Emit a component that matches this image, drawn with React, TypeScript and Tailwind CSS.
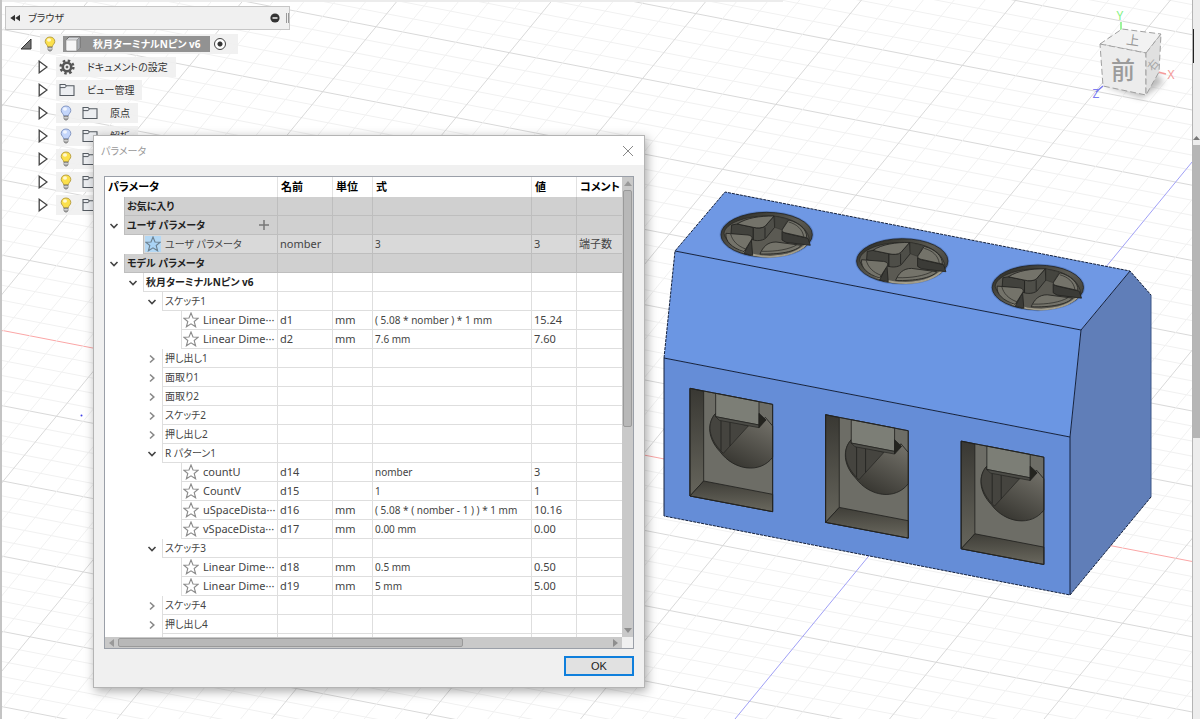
import type { ReactNode } from "react";
import clsx from "clsx";

interface ParamRow {
  level: number;
  label: string;
  kind: "band" | "user" | "group" | "param";
  open?: boolean;
  bold?: boolean;
  addable?: boolean;
  name?: string;
  unit?: string;
  formula?: string;
  value?: string;
  comment?: string;
}

const ROWS: ParamRow[] = [
  { level: 0, label: "お気に入り", kind: "band", bold: true },
  { level: 0, label: "ユーザ パラメータ", kind: "band", bold: true, open: true, addable: true },
  { level: 1, label: "ユーザ パラメータ", kind: "user", name: "nomber", formula: "3", value: "3", comment: "端子数" },
  { level: 0, label: "モデル パラメータ", kind: "band", bold: true, open: true },
  { level: 1, label: "秋月ターミナルNピン v6", kind: "group", bold: true, open: true },
  { level: 2, label: "スケッチ1", kind: "group", open: true },
  { level: 3, label: "Linear Dime···", kind: "param", name: "d1", unit: "mm", formula: "( 5.08 * nomber ) * 1 mm", value: "15.24" },
  { level: 3, label: "Linear Dime···", kind: "param", name: "d2", unit: "mm", formula: "7.6 mm", value: "7.60" },
  { level: 2, label: "押し出し1", kind: "group", open: false },
  { level: 2, label: "面取り1", kind: "group", open: false },
  { level: 2, label: "面取り2", kind: "group", open: false },
  { level: 2, label: "スケッチ2", kind: "group", open: false },
  { level: 2, label: "押し出し2", kind: "group", open: false },
  { level: 2, label: "R パターン1", kind: "group", open: true },
  { level: 3, label: "countU", kind: "param", name: "d14", formula: "nomber", value: "3" },
  { level: 3, label: "CountV", kind: "param", name: "d15", formula: "1", value: "1" },
  { level: 3, label: "uSpaceDista···", kind: "param", name: "d16", unit: "mm", formula: "( 5.08 * ( nomber - 1 ) ) * 1 mm", value: "10.16" },
  { level: 3, label: "vSpaceDista···", kind: "param", name: "d17", unit: "mm", formula: "0.00 mm", value: "0.00" },
  { level: 2, label: "スケッチ3", kind: "group", open: true },
  { level: 3, label: "Linear Dime···", kind: "param", name: "d18", unit: "mm", formula: "0.5 mm", value: "0.50" },
  { level: 3, label: "Linear Dime···", kind: "param", name: "d19", unit: "mm", formula: "5 mm", value: "5.00" },
  { level: 2, label: "スケッチ4", kind: "group", open: false },
  { level: 2, label: "押し出し4", kind: "group", open: false },
  { level: 2, label: "", kind: "group" },
];

const INDENT = ["w-0", "w-[19px]", "w-[38px]", "w-[57px]"];

function Star({ active }: { active?: boolean }) {
  return (
    <svg viewBox="0 0 16 16" className={clsx("h-4 w-4 shrink-0", active && "bg-[#b4d8f4]")} aria-hidden="true">
      <path
        d="M8 1 L10 6 L15.2 6.2 L11.2 9.5 L12.6 14.8 L8 11.8 L3.4 14.8 L4.8 9.5 L.8 6.2 L6 6 Z"
        fill={active ? "#a9d3f5" : "#fff"}
        stroke={active ? "#6b7f8e" : "#8a8a8a"}
        strokeWidth="1.1"
      />
    </svg>
  );
}

function Chevron({ open }: { open: boolean }) {
  return (
    <svg viewBox="0 0 10 10" className="h-[10px] w-[10px]" fill="none" strokeWidth="1.6" aria-hidden="true">
      {open ? <path d="M1.5 3 L5 6.5 L8.5 3" stroke="#444" /> : <path d="M3 1.5 L6.8 5 L3 8.5" stroke="#888" />}
    </svg>
  );
}

function Bulb({ on }: { on: boolean }) {
  return (
    <svg viewBox="0 0 12 16" className="h-4 w-3 shrink-0" aria-hidden="true">
      <path
        d="M6 1 C3 1 1.2 3 1.2 5.6 C1.2 7.8 3.6 8.8 3.8 11 L8.2 11 C8.4 8.8 10.8 7.8 10.8 5.6 C10.8 3 9 1 6 1Z"
        fill={on ? "#fbe04c" : "#c4d6fb"}
        stroke={on ? "#b39a3c" : "#7c90bd"}
        strokeWidth=".9"
      />
      <ellipse cx="5" cy="4" rx="2" ry="1.7" fill="#fff" opacity=".75" />
      <path d="M4 11 H8 V13.5 L7 15 H5 L4 13.5Z" fill="#aaa" stroke="#6d6d6d" strokeWidth=".7" />
      <path d="M4 12.7 H8" stroke="#eee" strokeWidth=".7" />
    </svg>
  );
}

function Folder() {
  return (
    <svg viewBox="0 0 16 14" className="h-[14px] w-4 shrink-0" aria-hidden="true">
      <path d="M1 12.5 V1.5 H6 L7.2 2.8 H15 V12.5Z" fill="#eceef1" stroke="#555b62" strokeWidth="1.1" />
      <path d="M1 4.6 H6.2 L7.4 2.8" fill="none" stroke="#555b62" />
    </svg>
  );
}

function Gear() {
  return (
    <svg viewBox="0 0 16 16" className="h-4 w-4 shrink-0" fill="none" stroke="#555" aria-hidden="true">
      <circle cx="8" cy="8" r="6.4" strokeWidth="2.4" strokeDasharray="2.5 2.52" />
      <circle cx="8" cy="8" r="4.2" strokeWidth="2.6" />
      <circle cx="8" cy="8" r="1" fill="#555" />
    </svg>
  );
}

function Cube() {
  return (
    <svg viewBox="0 0 16 16" className="h-4 w-4 shrink-0" stroke="#555" strokeWidth=".8" aria-hidden="true">
      <path d="M1 4 L4 1 H15 V12 L12 15 H2 L1 14Z" fill="#d9dbde" />
      <path d="M1 4 H12 V15 H2 L1 14Z" fill="#f6f6f7" stroke="#aaa" />
      <path d="M12 4 L15 1 V12 L12 15Z" fill="#a9adb3" stroke="#888" />
    </svg>
  );
}

function TreeRow({ icons, label }: { icons: ReactNode; label: string }) {
  return (
    <li className="flex h-[23px] items-center pl-[36px]">
      <button type="button" aria-label={`${label || "コンポーネント"}を展開`} className="mr-2 flex w-[10px] justify-center">
        <svg viewBox="0 0 10 14" className="h-[14px] w-[10px]" aria-hidden="true">
          <path d="M1.2 1.2 L9 7 L1.2 12.8Z" fill="#fff" stroke="#444" strokeWidth="1.3" />
        </svg>
      </button>
      <span className="flex h-5 items-center bg-[#f0f0f0]/90 pr-2 pl-[3px]">
        {icons}
        <span className="ml-3">{label}</span>
      </span>
    </li>
  );
}

function BrowserPanel() {
  return (
    <nav aria-label="ブラウザ" className="relative w-[288px] pt-[6px] text-[10px] leading-4 text-[#333]">
      <div className="ml-[3px] flex h-6 items-center border border-[#c6c6c6] bg-[#f0f0f0] pl-1">
        <button type="button" aria-label="折りたたむ">
          <svg viewBox="0 0 10 8" className="h-2 w-[10px]" aria-hidden="true">
            <path d="M5 .8 V7.2 L.3 4Z M10 .8 V7.2 L5.3 4Z" fill="#333" />
          </svg>
        </button>
        <span className="ml-2 flex-1">ブラウザ</span>
        <button type="button" aria-label="閉じる" className="mr-[6px]">
          <svg viewBox="0 0 10 10" className="h-[10px] w-[10px]" aria-hidden="true">
            <circle cx="5" cy="5" r="4.6" fill="#333" />
            <path d="M2.5 5 H7.5" stroke="#fff" strokeWidth="1.4" />
          </svg>
        </button>
        <span className="h-[10px] w-[3px] border-x border-[#999]" />
      </div>
      <ul className="pt-[2px]">
        <li className="flex h-[23px] items-center pl-[18px]">
          <button type="button" aria-label="ルートを折りたたむ">
            <svg viewBox="0 0 12 12" className="h-3 w-3" aria-hidden="true">
              <path d="M11 1 V11 H1Z" fill="#777" stroke="#333" />
            </svg>
          </button>
          <span className="ml-2 flex h-5 items-center bg-[#f0f0f0]/90 pr-3 pl-1">
            <Bulb on />
            <span className="mr-1 ml-[7px] flex h-4 items-center bg-[#929292] pr-[9px] pl-[2px] font-bold text-white">
              <Cube />
              <span className="ml-3">秋月ターミナルNピン v6</span>
            </span>
            <input
              type="radio"
              aria-label="アクティブ"
              defaultChecked
              className="h-3 w-3 appearance-none rounded-full border border-[#444] bg-[radial-gradient(#333_0_2px,#fff_3px)]"
            />
          </span>
        </li>
        <TreeRow icons={<Gear />} label="ドキュメントの設定" />
        <TreeRow icons={<Folder />} label="ビュー管理" />
        {["原点", "解析", "", "", ""].map((label, i) => (
          <TreeRow
            key={i}
            label={label}
            icons={
              <span className="flex items-center gap-[10px] pl-[1px]">
                <Bulb on={i > 1} />
                <Folder />
              </span>
            }
          />
        ))}
      </ul>
    </nav>
  );
}

function ParamTableRow({ row }: { row: ParamRow }) {
  const shade = row.kind === "band" ? "bg-[#d0d0d0]" : row.kind === "user" ? "bg-[#d9d9d9]" : "bg-white";
  const line = row.kind === "band" || row.kind === "user" ? "border-[#bebebe]" : "border-[#dedede]";
  const cell = clsx("border-b border-l p-0 pl-[2px] whitespace-nowrap", shade, line);
  const hasStar = row.kind === "param" || row.kind === "user";

  return (
    <tr className="h-[19px]">
      <td className="p-0">
        <div className="flex h-[19px]">
          <span className={clsx("shrink-0", INDENT[row.level])} />
          <span className="flex w-[19px] shrink-0 items-center justify-center pr-[2px]">
            {row.open !== undefined && (
              <button type="button" aria-label={`${row.label}の表示切替`}>
                <Chevron open={row.open} />
              </button>
            )}
          </span>
          <span className={clsx("flex min-w-0 flex-1 items-center border-b border-l", shade, line)}>
            {hasStar && (
              <button type="button" aria-label="お気に入りに追加" className="ml-[1px]">
                <Star active={row.kind === "user"} />
              </button>
            )}
            <span
              className={clsx(
                "flex-1 whitespace-nowrap",
                hasStar ? "ml-1" : "ml-[2px]",
                row.kind !== "param" && "text-[10px]",
                row.bold && "font-bold text-[#222]"
              )}
            >
              {row.label}
            </span>
            {row.addable && (
              <button type="button" aria-label="ユーザ パラメータを追加" className="mr-2">
                <svg viewBox="0 0 10 10" className="h-[10px] w-[10px]" stroke="#777" strokeWidth="1.5" aria-hidden="true">
                  <path d="M5 0 V10 M0 5 H10" />
                </svg>
              </button>
            )}
          </span>
        </div>
      </td>
      <td className={cell}>{row.name}</td>
      <td className={cell}>{row.unit}</td>
      <td className={clsx(cell, "text-[10px]")}>{row.formula}</td>
      <td className={cell}>{row.value}</td>
      <td className={cell}>{row.comment}</td>
    </tr>
  );
}

function ParameterDialog() {
  return (
    <section
      role="dialog"
      aria-label="パラメータ"
      className="absolute top-[135px] left-[91px] w-[552px] border border-[#b4b4b4] bg-[#f0f0f0] text-[11px] leading-4 shadow-[2px_3px_10px_rgba(0,0,0,0.35)]"
    >
      <header className="flex h-[29px] items-center justify-between bg-white pr-[10px] pl-[7px]">
        <h1 className="text-[10px] text-[#999]">パラメータ</h1>
        <button type="button" aria-label="閉じる">
          <svg viewBox="0 0 12 12" className="h-3 w-3" stroke="#888" aria-hidden="true">
            <path d="M1 1 L11 11 M11 1 L1 11" />
          </svg>
        </button>
      </header>
      <div className="px-[10px] pt-[11px] pb-[11px]">
        <div className="grid grid-cols-[1fr_11px] border border-[#9a9fa8]">
          <div className="h-[460px] overflow-hidden bg-white">
            <table className="w-full table-fixed border-separate border-spacing-0 text-left text-[#444]">
              <colgroup>
                <col className="w-[172px]" />
                <col className="w-[55px]" />
                <col className="w-[40px]" />
                <col className="w-[159px]" />
                <col className="w-[45px]" />
                <col />
              </colgroup>
              <thead>
                <tr className="h-5 text-black">
                  <th className="p-0 pl-[3px]">パラメータ</th>
                  {["名前", "単位", "式", "値", "コメント"].map((title) => (
                    <th key={title} className="border-l border-[#e2e2e2] p-0 pl-[3px] whitespace-nowrap">
                      {title}
                    </th>
                  ))}
                </tr>
              </thead>
              <tbody>
                {ROWS.map((row, i) => (
                  <ParamTableRow key={i} row={row} />
                ))}
              </tbody>
            </table>
          </div>
          <div className="flex flex-col items-center bg-[#c9c9c9]">
            <svg viewBox="0 0 8 5" className="my-1 h-[5px] w-2" aria-hidden="true">
              <path d="M0 5 L4 0 L8 5Z" fill="#999" />
            </svg>
            <span className="h-[237px] w-[9px] rounded-xs border border-[#9a9a9a] bg-[#b8b8b8]" />
            <svg viewBox="0 0 8 5" className="mt-auto mb-1 h-[5px] w-2" aria-hidden="true">
              <path d="M0 0 L4 5 L8 0Z" fill="#8e8e8e" />
            </svg>
          </div>
          <div className="flex h-[11px] items-center bg-[#c9c9c9] px-1">
            <svg viewBox="0 0 5 8" className="mr-1 h-2 w-[5px]" aria-hidden="true">
              <path d="M5 0 L0 4 L5 8Z" fill="#999" />
            </svg>
            <span className="h-[9px] w-[345px] rounded-xs border border-[#9a9a9a] bg-[#b8b8b8]" />
            <svg viewBox="0 0 5 8" className="ml-auto h-2 w-[5px]" aria-hidden="true">
              <path d="M0 0 L5 4 L0 8Z" fill="#8e8e8e" />
            </svg>
          </div>
        </div>
        <div className="flex justify-end pt-[7px]">
          <button
            type="button"
            className="h-5 w-[70px] border-2 border-[#0f7fdc] bg-[#e1e1e1] text-center font-['Liberation_Sans',sans-serif] text-[11px] text-[#222]"
          >
            OK
          </button>
        </div>
      </div>
    </section>
  );
}

function range(from: number, to: number) {
  return Array.from({ length: to - from + 1 }, (_, i) => from + i);
}

function Grid() {
  const lineColor = (k: number, axis: string) => (k === 0 ? axis : k % 5 === 0 ? "#d9d9d9" : "#f1f1f1");
  return (
    <g>
      {range(-40, 28).map((k) => {
        const y = 330 + k * 15.05;
        return <line key={k} x1="0" y1={y} x2="1200" y2={y + 233} stroke={lineColor(k, "#fba6a6")} />;
      })}
      {range(-44, 16).map((k) => {
        const x = 1325 + k * 30.9;
        return <line key={k} x1={x} y1="0" x2={x - 590} y2="719" stroke={lineColor(k, "#a0a0f6")} />;
      })}
    </g>
  );
}

function Screw() {
  return (
    <g stroke="#22221f" strokeWidth="2.5" strokeLinejoin="round">
      <ellipse cx="350" cy="164" rx="141" ry="71" fill="#4a6cae" stroke="none" opacity=".6" />
      <ellipse cx="350" cy="164" rx="137" ry="67" fill="url(#screwWall)" />
      <path d="M222 160 C228 190 275 228 350 228 C420 228 475 205 478 178 C470 135 420 108 350 108 C285 108 225 130 222 160Z" fill="#5b5a53" strokeWidth="2" />
      <path d="M235 180 C265 217 310 230 360 230 C410 228 450 214 472 190" fill="none" stroke="#a29d8c" strokeWidth="6" />
      <path d="M245 135 L262 132 L310 142 V180 L243 160Z" fill="#42423d" />
      <path d="M310 142 C325 146 338 144 346 138 L372 108 L374 142 L347 175 C335 183 320 183 310 180Z" fill="#4e4e48" />
      <path d="M345 142 V174" fill="none" />
      <path d="M262 132 C290 113 330 108 372 108 L346 138 C338 145 322 145 310 142Z" fill="#74736a" />
      <path d="M374 108 L414 118 L396 150 L374 142Z" fill="#45453f" strokeWidth="1" />
      <path d="M396 154 L408 160 L474 175 L481 196 L408 187 L396 180Z" fill="#3b3b37" />
      <path d="M416 120 C448 128 472 150 470 173 L408 159 C397 157 395 153 398 147Z" fill="#74736a" />
      <path d="M416 126 C440 132 458 148 461 170" fill="none" strokeWidth="2" />
      <path d="M304 178 L308 226 L282 221Z" fill="#3b3b37" />
      <path d="M228 160 L294 165 C305 167 309 172 304 180 L282 215 C245 203 225 184 228 160Z" fill="#74736a" />
      <path d="M242 162 C247 182 262 198 287 207" fill="none" strokeWidth="2" />
      <path d="M330 222 C339 201 352 186 378 186 L454 196 C438 215 387 224 330 222Z" fill="#74736a" />
      <path d="M335 214 C380 215 417 208 440 195" fill="none" strokeWidth="2" />
    </g>
  );
}

function WireHole() {
  return (
    <g stroke="#22221f" strokeWidth="2.5" strokeLinejoin="round">
      <path d="M90 55 L338 103 V425 L90 378Z" fill="#6d6d66" />
      <path d="M90 55 L131 64 V333 L90 378Z" fill="url(#holeWall)" />
      <path d="M90 378 L131 333 L338 373 V425Z" fill="url(#holeFloor)" />
      <path
        d="M167 130 C141 158 142 205 180 245 C222 302 300 312 338 262 V168 L316 142 L297 168 L167 140Z"
        fill="url(#bore)"
      />
      <path d="M167 130 C141 158 142 205 190 250 L265 168 L167 140Z" fill="#45443f" strokeWidth="2" />
      <path d="M183 152 V242 M210 156 V228" fill="none" />
      <path d="M167 70 L297 95 V165 L167 140Z" fill="#7c7e76" />
      <path d="M167 140 L297 165 V173 L178 151Z" fill="#4c4c47" strokeWidth="2" />
      <path d="M297 130 L318 150 L297 173Z" fill="#24241f" />
      <path d="M90 55 L338 103 V425 L90 378Z" fill="none" />
    </g>
  );
}

function TerminalModel() {
  return (
    <g>
      <defs>
        <linearGradient id="screwWall" x1="0" y1="0" x2="1" y2="1">
          <stop offset="0" stopColor="#24241f" />
          <stop offset=".5" stopColor="#5c5b53" />
          <stop offset="1" stopColor="#35342f" />
        </linearGradient>
        <linearGradient id="holeWall" x1="0" y1="0" x2="0" y2="1">
          <stop offset="0" stopColor="#393833" />
          <stop offset="1" stopColor="#66655c" />
        </linearGradient>
        <linearGradient id="holeFloor" x1="0" y1="0" x2="0" y2="1">
          <stop offset="0" stopColor="#3f3e38" />
          <stop offset="1" stopColor="#6a685e" />
        </linearGradient>
        <linearGradient id="bore" x1="0.9" y1="0" x2="0.3" y2="1">
          <stop offset="0" stopColor="#77756d" />
          <stop offset="1" stopColor="#33322d" />
        </linearGradient>
      </defs>
      <path d="M725 192 L1130 271 L1081 330 L675 251Z" fill="#6f98e4" />
      <path d="M675 251 L1081 330 L1070 437 L664 358Z" fill="#6b96e3" />
      <path d="M664 358 L1070 437 V595 L664 516Z" fill="#658dd7" />
      <path d="M1130 271 L1151 295 V497 L1070 595 V437 L1081 330Z" fill="#607eb8" />
      <g fill="none" stroke="#14213d">
        <path d="M664 358 L675 251 L725 192 L1130 271 L1151 295 M1151 497 L1070 595 L664 516" strokeDasharray="3 1" />
        <path d="M664 516 V358 L1070 437 V595 M675 251 L1081 330 L1130 271 M1081 330 L1070 437" />
        <path d="M1151 295 V497" stroke="#3d5688" />
      </g>
      {[0, 1, 2].map((i) => (
        <g key={i} transform={`translate(${i * 135.6} ${i * 26.4})`}>
          <g transform="translate(650 180) scale(0.3333)">
            <Screw />
          </g>
          <g transform="translate(660 370) scale(0.3333)">
            <WireHole />
          </g>
        </g>
      ))}
    </g>
  );
}

function ViewCube() {
  return (
    <svg viewBox="0 0 100 110" className="absolute top-0 right-0 h-[110px] w-[100px]" aria-label="ビューキューブ">
      <defs>
        <filter id="cubeShadow" x="-30%" y="-30%" width="160%" height="160%">
          <feGaussianBlur stdDeviation="3" />
        </filter>
      </defs>
      <path d="M12 85 L50 98 L72 82 L60 70Z" fill="#777" opacity=".5" filter="url(#cubeShadow)" />
      <path d="M29 22 V30" stroke="#7cf07c" strokeWidth="1.5" />
      <path d="M11 86 L4 92" stroke="#7676ee" strokeWidth="1.5" />
      <path d="M66 72 L74 74" stroke="#f69a9a" strokeWidth="1.5" />
      <g stroke="#a0a0a0" strokeDasharray="6 3">
        <path d="M8 44 L30 29 L69 34 L54 53Z" fill="#f2f2f2" />
        <path d="M8 44 L54 53 V95 L11 86Z" fill="#ececec" />
        <path d="M54 53 L69 34 L67 72 L54 95Z" fill="#e0e0e0" />
      </g>
      <g textAnchor="middle">
        <text x="31" y="79" fontSize="24" fill="#9b9b9b" className="font-medium">前</text>
        <text x="41" y="45" fontSize="13" fill="#999" transform="rotate(8 41 40)">上</text>
        <text x="61" y="69" fontSize="11" fill="#a5a5a5" transform="rotate(-50 61 65)">右</text>
        <text x="28" y="20" fontSize="12" fill="#84f284">Y</text>
        <text x="79" y="79" fontSize="12" fill="#f49a9a">X</text>
        <text x="4" y="98" fontSize="12" fill="#7d7df0">Z</text>
      </g>
    </svg>
  );
}

export default function App() {
  return (
    <div className="flex min-h-screen bg-[#f0f0f0] font-['Noto_Sans','Noto_Sans_CJK_JP',sans-serif] [font-feature-settings:'palt']">
      <div className="w-[2px] bg-[#c4c4c4]" />
      <main className="relative flex-1 overflow-hidden bg-white">
        <svg
          viewBox="2 0 1190 719"
          preserveAspectRatio="xMinYMin slice"
          className="absolute inset-0 h-full w-full"
          role="img"
          aria-label="ターミナルブロックの3Dモデル"
        >
          <Grid />
          <path d="M2 0 H783 V2 H2Z" fill="#ececec" />
          <circle cx="81.5" cy="415.5" r="1" fill="#4040e8" />
          <TerminalModel />
        </svg>
        <ViewCube />
        <BrowserPanel />
        <ParameterDialog />
      </main>
      <aside className="flex w-2 flex-col border-l border-[#b4b4b4] bg-[#ededed]">
        <span className="mt-[29px] h-[34px] w-[1px] bg-[#222]" />
        <svg viewBox="0 0 7 4" className="mt-[73px] h-1 w-[7px]" aria-hidden="true">
          <path d="M0 4 L3.5 0 L7 4Z" fill="#777" />
        </svg>
        <span className="mt-[5px] h-[293px] bg-[#b6b6b6]" />
      </aside>
    </div>
  );
}
